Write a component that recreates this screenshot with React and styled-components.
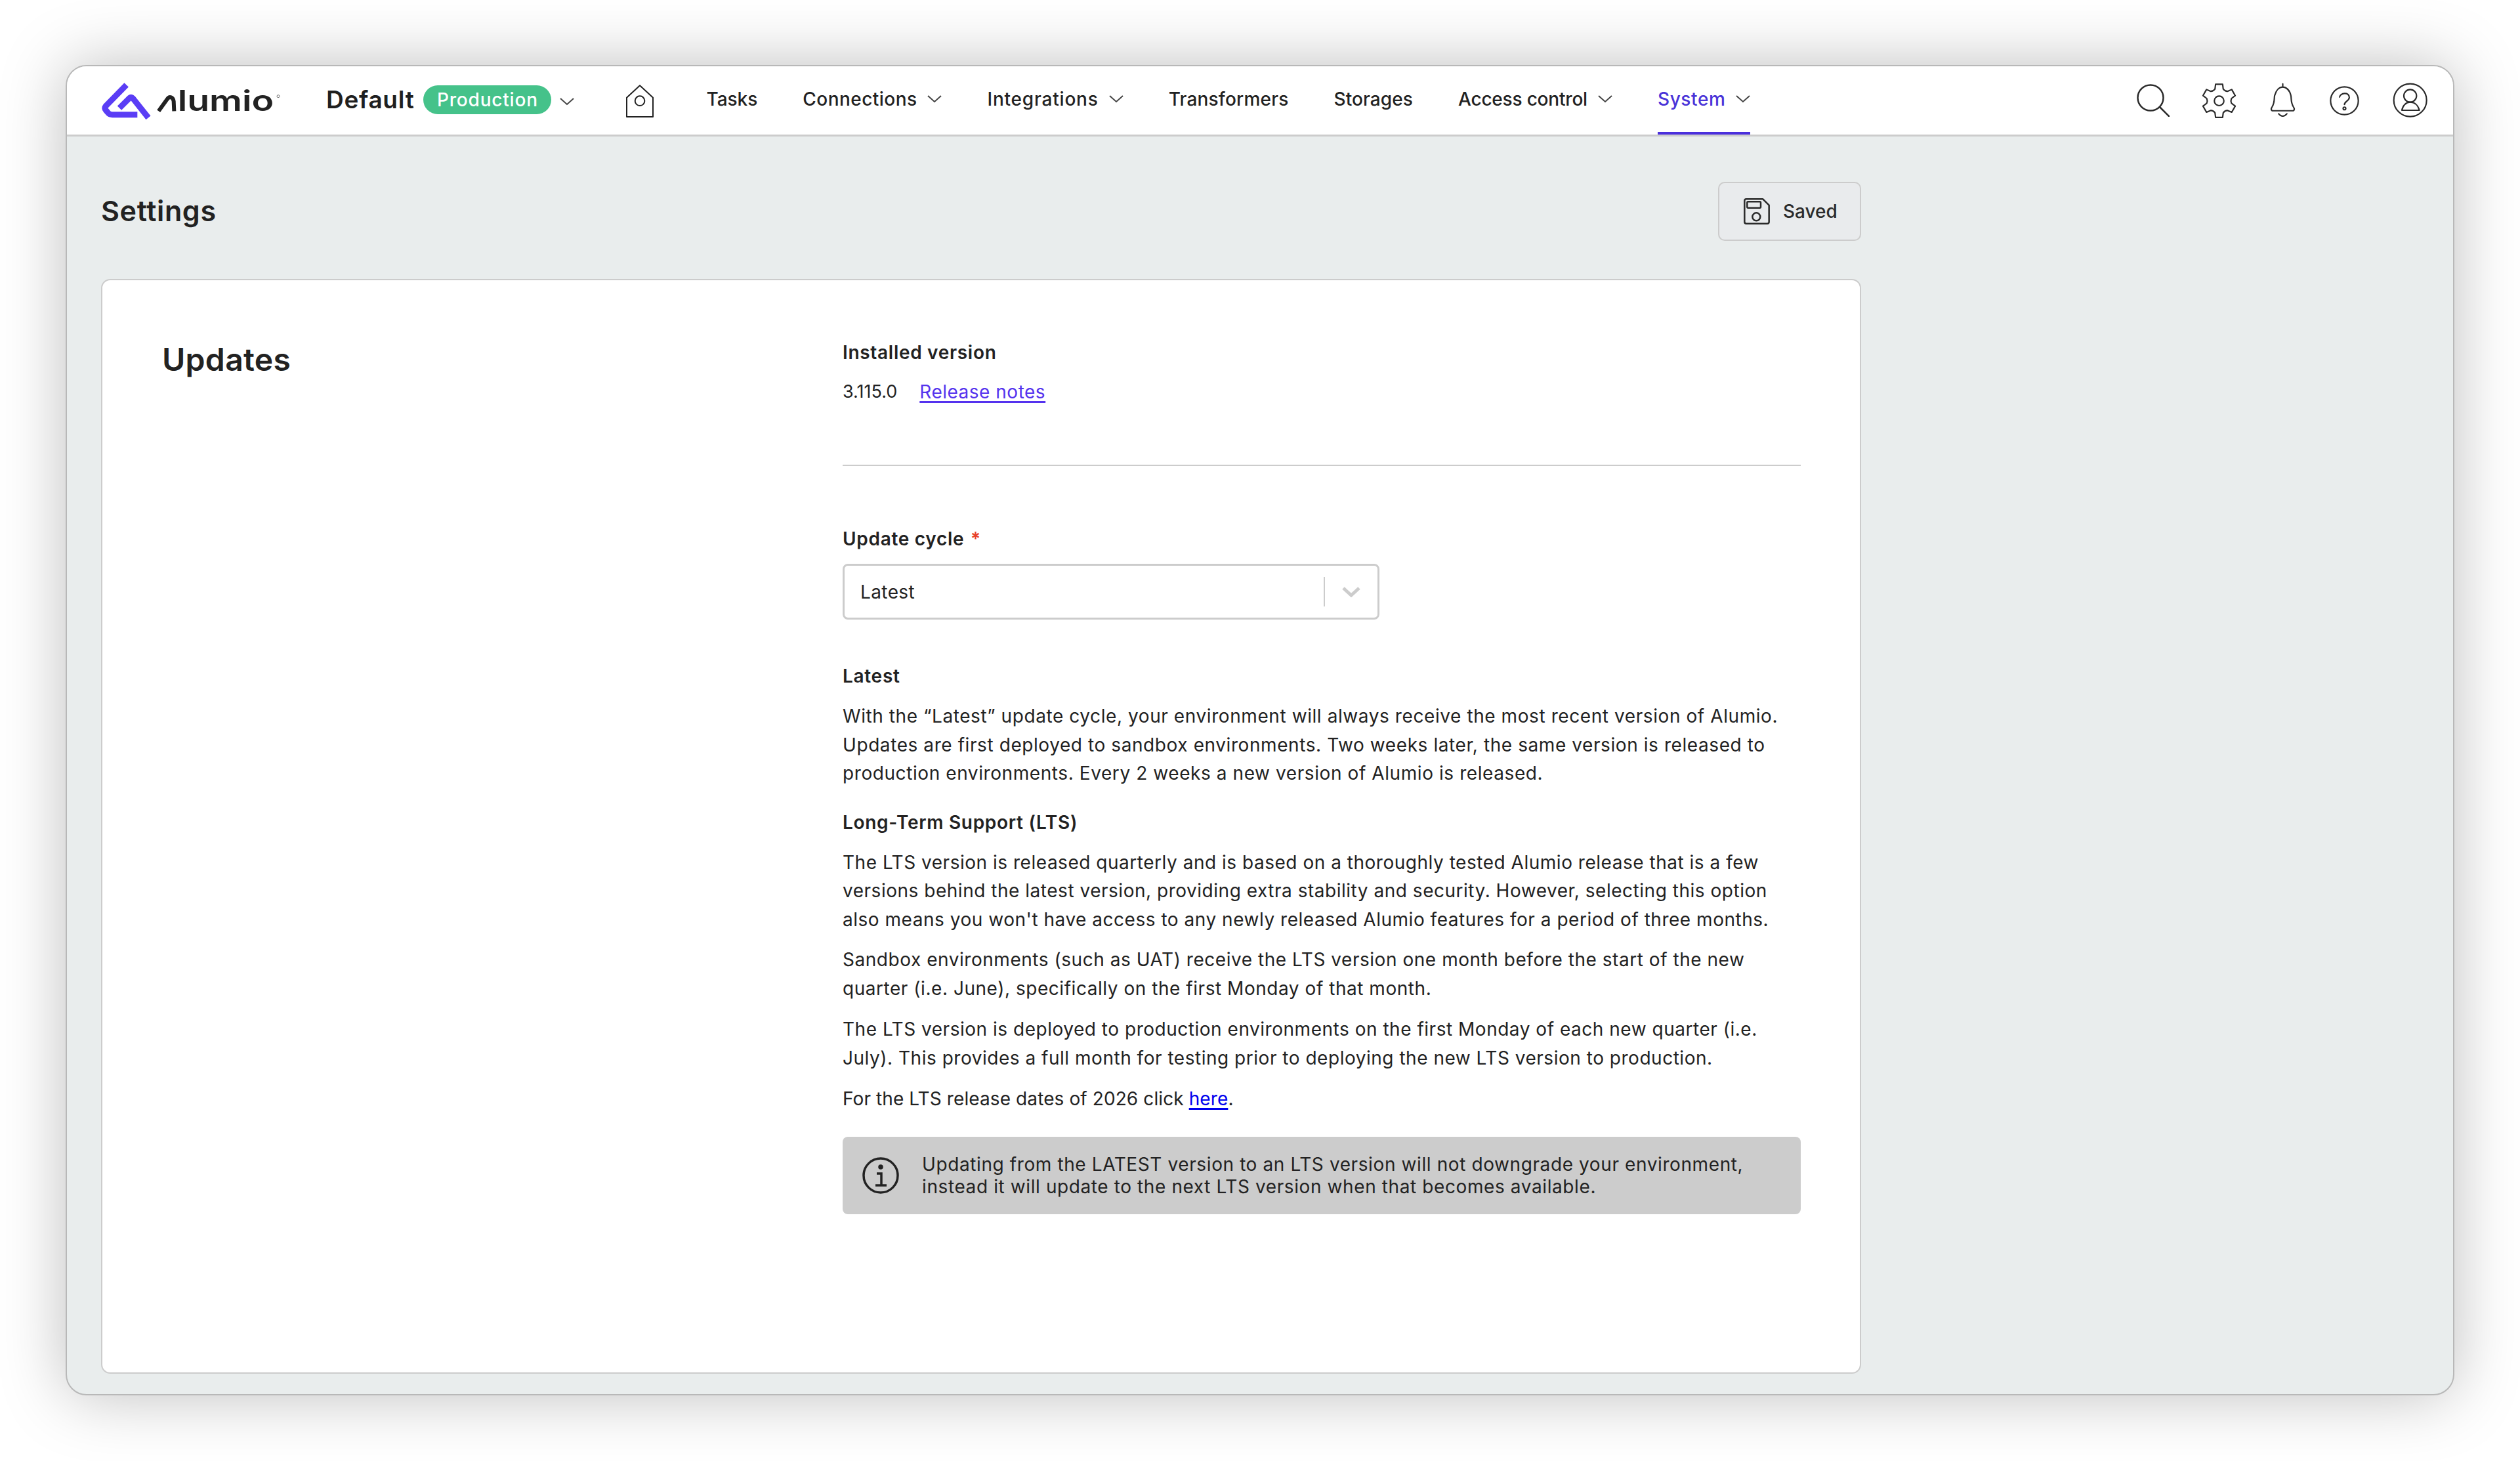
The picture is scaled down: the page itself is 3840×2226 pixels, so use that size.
import React from "react";
import styled, { createGlobalStyle } from "styled-components";

const Global = createGlobalStyle`
  html, body { margin: 0; padding: 0; background: #fff; }
  * { box-sizing: border-box; }
  body { font-family: Inter, "Liberation Sans", sans-serif; color: #222; }
`;

const Shell = styled.div`
  width: 3840px;
  height: 2226px;
  padding: 99px 100px 100px;
`;
const Window = styled.div`
  width: 3640px;
  height: 2027px;
  display: flex;
  flex-direction: column;
  background: #e9eded;
  border: 2px solid #b8b8b8;
  border-radius: 32px;
  overflow: hidden;
  box-shadow: 0 0 100px rgba(0, 0, 0, 0.26);
`;
const Header = styled.header`
  height: 107px;
  flex: none;
  display: flex;
  align-items: center;
  padding: 0 37px 0 38px;
  background: #fff;
  border-bottom: 3px solid #cccccc;
`;
const Logo = styled.svg`
  width: 300px;
  height: 75px;
  flex: none;
`;
const LogoWord = styled.text`
  font-family: Inter, sans-serif;
  font-size: 132px;
  font-weight: 600;
  fill: #222;
`;
const Environment = styled.div`
  display: flex;
  align-items: center;
  margin-left: 57px;
  margin-top: -3px;
`;
const EnvName = styled.span`
  font-size: 37px;
  font-weight: 600;
  letter-spacing: 0.7px;
  color: #1f1f1f;
`;
const Badge = styled.span`
  display: flex;
  align-items: center;
  justify-content: center;
  width: 195px;
  height: 44px;
  margin-left: 14px;
  border-radius: 22px;
  background: #45c28a;
  color: #fff;
  font-size: 28px;
  font-weight: 500;
  letter-spacing: 0.8px;
`;
const Chevron = styled.svg`
  width: 22px;
  height: 12px;
  flex: none;
  fill: none;
  stroke: #444;
  stroke-width: 2;
`;
const EnvChevron = styled(Chevron)`
  margin-left: 13px;
  margin-top: 6px;
`;
const HomeIcon = styled.svg`
  width: 70px;
  height: 70px;
  flex: none;
  margin-left: 65px;
  margin-top: -2px;
  fill: none;
  stroke: #222;
  stroke-width: 6;
  stroke-linejoin: round;
`;
const Nav = styled.nav`
  align-self: stretch;
  display: flex;
  gap: 69px;
  margin-left: 66px;
`;
const NavItem = styled.a`
  display: flex;
  align-items: center;
  gap: 16px;
  border-bottom: 4px solid ${(p) => (p.$active ? "#4a2fdc" : "transparent")};
  color: ${(p) => (p.$active ? "#4a34d8" : "#222")};
  font-size: 28px;
  font-weight: 500;
  letter-spacing: ${(p) => p.$spacing}px;
  white-space: nowrap;
`;
const Tools = styled.div`
  display: flex;
  align-items: center;
  gap: 49px;
  margin-left: auto;
`;
const ToolIcon = styled.svg`
  flex: none;
  fill: none;
  stroke: #2a2a2a;
  stroke-width: ${(p) => p.$stroke || 6.5};
  stroke-linejoin: round;
  stroke-linecap: round;
`;
const Main = styled.main`
  flex: 1;
  min-height: 0;
  display: flex;
  flex-direction: column;
  width: 2786px;
  padding: 69px 52px 31px;
`;
const TitleRow = styled.div`
  flex: none;
  height: 90px;
  display: flex;
  align-items: center;
  justify-content: space-between;
`;
const PageTitle = styled.h1`
  margin: 0 0 2px;
  font-size: 43px;
  font-weight: 600;
  letter-spacing: 0.65px;
  color: #222;
`;
const SaveButton = styled.button`
  width: 218px;
  height: 90px;
  display: flex;
  align-items: center;
  gap: 20px;
  padding: 0 0 0 37px;
  background: #e9ebed;
  border: 2px solid #cccccc;
  border-radius: 10px;
  font: 500 28px Inter, sans-serif;
  color: #2b2b2b;
`;
const SaveIcon = styled.svg`
  width: 40px;
  height: 40px;
  flex: none;
  fill: none;
  stroke: #2a2a2a;
  stroke-width: 7.5;
  stroke-linejoin: round;
`;
const Card = styled.section`
  flex: 1;
  min-height: 0;
  margin-top: 58px;
  display: grid;
  grid-template-columns: 1037px 1460px;
  padding: 92px 90px 0 91px;
  background: #fff;
  border: 2px solid #cccccc;
  border-radius: 14px;
`;
const SectionTitle = styled.h2`
  margin: 0;
  font-size: 48px;
  line-height: 58px;
  font-weight: 600;
  letter-spacing: 0.3px;
  color: #222;
`;
const Column = styled.div`
  display: flex;
  flex-direction: column;
  align-items: stretch;
`;
const Label = styled.div`
  margin-top: ${(p) => p.$top || 0}px;
  font-size: 28px;
  line-height: 36px;
  font-weight: 600;
  letter-spacing: 0.7px;
  color: #222;
  white-space: nowrap;
`;
const Required = styled.span`
  color: #e8412a;
  margin-left: 2px;
`;
const VersionRow = styled.div`
  margin-top: 24px;
  display: flex;
  gap: 34px;
  font-size: 28px;
  line-height: 36px;
  font-weight: 400;
  letter-spacing: 0.5px;
`;
const Version = styled.span`
  font-size: 27px;
  letter-spacing: 0;
  color: #222;
`;
const TextLink = styled.a`
  color: ${(p) => p.$color};
  text-decoration: underline;
  text-decoration-thickness: 2.5px;
  text-underline-offset: 4px;
`;
const Divider = styled.hr`
  width: 100%;
  height: 2px;
  margin: 93px 0 0;
  border: 0;
  background: #cccccc;
`;
const Select = styled.div`
  width: 818px;
  height: 85px;
  margin-top: 20px;
  display: flex;
  align-items: center;
  padding: 0 26px 0 24px;
  background: #fff;
  border: 3px solid #cccccc;
  border-radius: 8px;
  font-size: 28px;
  letter-spacing: 0.4px;
  color: #222;
`;
const SelectValue = styled.span`
  flex: 1;
`;
const SelectDivider = styled.span`
  width: 2px;
  height: 45px;
  background: #cccccc;
  margin-right: 26px;
`;
const SelectChevron = styled.svg`
  width: 28px;
  height: 16px;
  fill: none;
  stroke: #cccccc;
  stroke-width: 5;
`;
const Paragraph = styled.p`
  margin: ${(p) => p.$top || 0}px 0 0;
  font-size: 28px;
  line-height: 43.5px;
  font-weight: 400;
  letter-spacing: ${(p) => p.$spacing}px;
  color: #222;
  white-space: nowrap;
`;
const Alert = styled.div`
  height: 118px;
  margin-top: 35px;
  display: flex;
  align-items: center;
  gap: 34px;
  padding: 0 0 0 29px;
  background: #cccccc;
  border-radius: 8px;
`;
const InfoIcon = styled.svg`
  width: 58px;
  height: 58px;
  flex: none;
  fill: none;
  stroke: #222;
  stroke-width: 3.5;
`;
const AlertText = styled.div`
  font-size: 28px;
  line-height: 34px;
  letter-spacing: 0.6px;
  color: #222;
  white-space: nowrap;
`;

const polar = (r, deg) => {
  const a = (deg * Math.PI) / 180;
  return `${(110 + r * Math.cos(a)).toFixed(1)} ${(113 + r * Math.sin(a)).toFixed(1)}`;
};
const gearPath = (() => {
  let d = "";
  for (let k = 0; k < 6; k += 1) {
    const a = -90 + 60 * k;
    d += `${k === 0 ? "M" : "L"}${polar(58, a - 19)} L${polar(78, a - 12)} L${polar(78, a + 12)} L${polar(58, a + 19)} Q${polar(52, a + 30)} `;
    d += polar(58, a + 41) + " ";
  }
  return d + "Z";
})();

const Caret = ({ as: Comp = Chevron }) => (
  <Comp viewBox="0 0 22 12">
    <polyline points="1,1 11,10 21,1" />
  </Comp>
);

const navItems = [
  { label: "Tasks", spacing: 0 },
  { label: "Connections", spacing: 0.45, menu: true },
  { label: "Integrations", spacing: 0.8, menu: true },
  { label: "Transformers", spacing: 0.2 },
  { label: "Storages", spacing: 0.1 },
  { label: "Access control", spacing: -0.2, menu: true },
  { label: "System", spacing: 0.6, menu: true, active: true },
];

export default function App() {
  return (
    <>
      <Global />
      <Shell>
        <Window>
          <Header>
            <Logo viewBox="0 0 900 225" aria-label="Alumio">
              <g fill="none" stroke="#5a3df5" strokeWidth="27" strokeLinejoin="round">
                <path d="M158 40 L64 136 Q56 146 64 156 L76 170 Q82 176 94 176 L208 176" />
                <path d="M126 146 L172 100 Q180 94 188 102 L258 190" />
              </g>
              <path d="M305 160 L345 104 Q352 94 362 97 Q372 101 374 115 L376 160" fill="none" stroke="#222" strokeWidth="18" />
              <LogoWord x="392" y="160" textLength="440" lengthAdjust="spacingAndGlyphs">lumio</LogoWord>
              <circle cx="852" cy="92" r="6" fill="none" stroke="#777" strokeWidth="3" />
            </Logo>
            <Environment>
              <EnvName>Default</EnvName>
              <Badge>Production</Badge>
              <Caret as={EnvChevron} />
            </Environment>
            <HomeIcon viewBox="0 0 210 210">
              <path d="M105 40 L45 95 V183 H165 V95 Z" />
              <circle cx="105" cy="110" r="22" />
            </HomeIcon>
            <Nav>
              {navItems.map((item) => (
                <NavItem key={item.label} $active={item.active} $spacing={item.spacing}>
                  {item.label}
                  {item.menu && <Caret />}
                </NavItem>
              ))}
            </Nav>
            <Tools>
              <ToolIcon width="50" height="50" viewBox="0 0 50 50" $stroke={2.5}>
                <circle cx="21" cy="21" r="19.5" />
                <line x1="35" y1="35" x2="49" y2="49" />
              </ToolIcon>
              <ToolIcon width="53" height="55" viewBox="30 30 160 165">
                <path d={gearPath} />
                <circle cx="110" cy="113" r="22" />
              </ToolIcon>
              <ToolIcon width="43" height="57" viewBox="340 25 130 170">
                <path d="M405 32 V47 M356 156 Q348 150 356 138 C370 115 364 96 368 85 C375 60 390 47 405 47 C420 47 437 60 442 85 C446 96 440 115 454 138 Q462 150 454 156 Z" />
                <path d="M386 170 Q405 192 424 170" />
              </ToolIcon>
              <ToolIcon width="47" height="47" viewBox="155 385 140 140">
                <circle cx="225" cy="455" r="63" />
                <path d="M203 438 C204 420 247 412 247 440 C247 455 225 458 225 472" />
                <circle cx="225" cy="490" r="6" />
              </ToolIcon>
              <ToolIcon width="56" height="56" viewBox="435 372 168 168">
                <circle cx="518" cy="455" r="75" />
                <circle cx="518" cy="435" r="29" />
                <path d="M480 501 C484 478 500 464 518 464 C538 464 554 478 560 501 Z" />
              </ToolIcon>
            </Tools>
          </Header>
          <Main>
            <TitleRow>
              <PageTitle>Settings</PageTitle>
              <SaveButton type="button">
                <SaveIcon viewBox="0 0 120 120">
                  <path d="M12 4 H88 L116 32 V108 Q116 116 108 116 H12 Q4 116 4 108 V12 Q4 4 12 4 Z" />
                  <rect x="16" y="16" width="62" height="28" rx="4" />
                  <circle cx="58" cy="85" r="18" />
                </SaveIcon>
                Saved
              </SaveButton>
            </TitleRow>
            <Card>
              <SectionTitle>Updates</SectionTitle>
              <Column>
                <Label>Installed version</Label>
                <VersionRow>
                  <Version>3.115.0</Version>
                  <TextLink href="#" $color="#5533ee">Release notes</TextLink>
                </VersionRow>
                <Divider />
                <Label $top={93}>
                  Update cycle <Required>*</Required>
                </Label>
                <Select>
                  <SelectValue>Latest</SelectValue>
                  <SelectDivider />
                  <SelectChevron viewBox="0 0 28 16">
                    <polyline points="2,2 14,13 26,2" />
                  </SelectChevron>
                </Select>
                <Label $top={68}>Latest</Label>
                <Paragraph $top={22} $spacing={0.58}>
                  With the “Latest” update cycle, your environment will always receive the most recent version of Alumio.
                  <br />
                  Updates are first deployed to sandbox environments. Two weeks later, the same version is released to
                  <br />
                  production environments. Every 2 weeks a new version of Alumio is released.
                </Paragraph>
                <Label $top={34}>Long-Term Support (LTS)</Label>
                <Paragraph $top={22} $spacing={0.52}>
                  The LTS version is released quarterly and is based on a thoroughly tested Alumio release that is a few
                  <br />
                  versions behind the latest version, providing extra stability and security. However, selecting this option
                  <br />
                  also means you won't have access to any newly released Alumio features for a period of three months.
                </Paragraph>
                <Paragraph $top={18} $spacing={0.54}>
                  Sandbox environments (such as UAT) receive the LTS version one month before the start of the new
                  <br />
                  quarter (i.e. June), specifically on the first Monday of that month.
                </Paragraph>
                <Paragraph $top={19} $spacing={0.52}>
                  The LTS version is deployed to production environments on the first Monday of each new quarter (i.e.
                  <br />
                  July). This provides a full month for testing prior to deploying the new LTS version to production.
                </Paragraph>
                <Paragraph $top={19} $spacing={0.1}>
                  For the LTS release dates of 2026 click <TextLink href="#" $color="#0000ee">here</TextLink>.
                </Paragraph>
                <Alert>
                  <InfoIcon viewBox="0 0 58 58">
                    <circle cx="29" cy="29" r="26" />
                    <path d="M23 26 H30 V44 M21 44 H38" />
                    <circle cx="29" cy="16" r="2" fill="#222" />
                  </InfoIcon>
                  <AlertText>
                    Updating from the LATEST version to an LTS version will not downgrade your environment,
                    <br />
                    instead it will update to the next LTS version when that becomes available.
                  </AlertText>
                </Alert>
              </Column>
            </Card>
          </Main>
        </Window>
      </Shell>
    </>
  );
}
